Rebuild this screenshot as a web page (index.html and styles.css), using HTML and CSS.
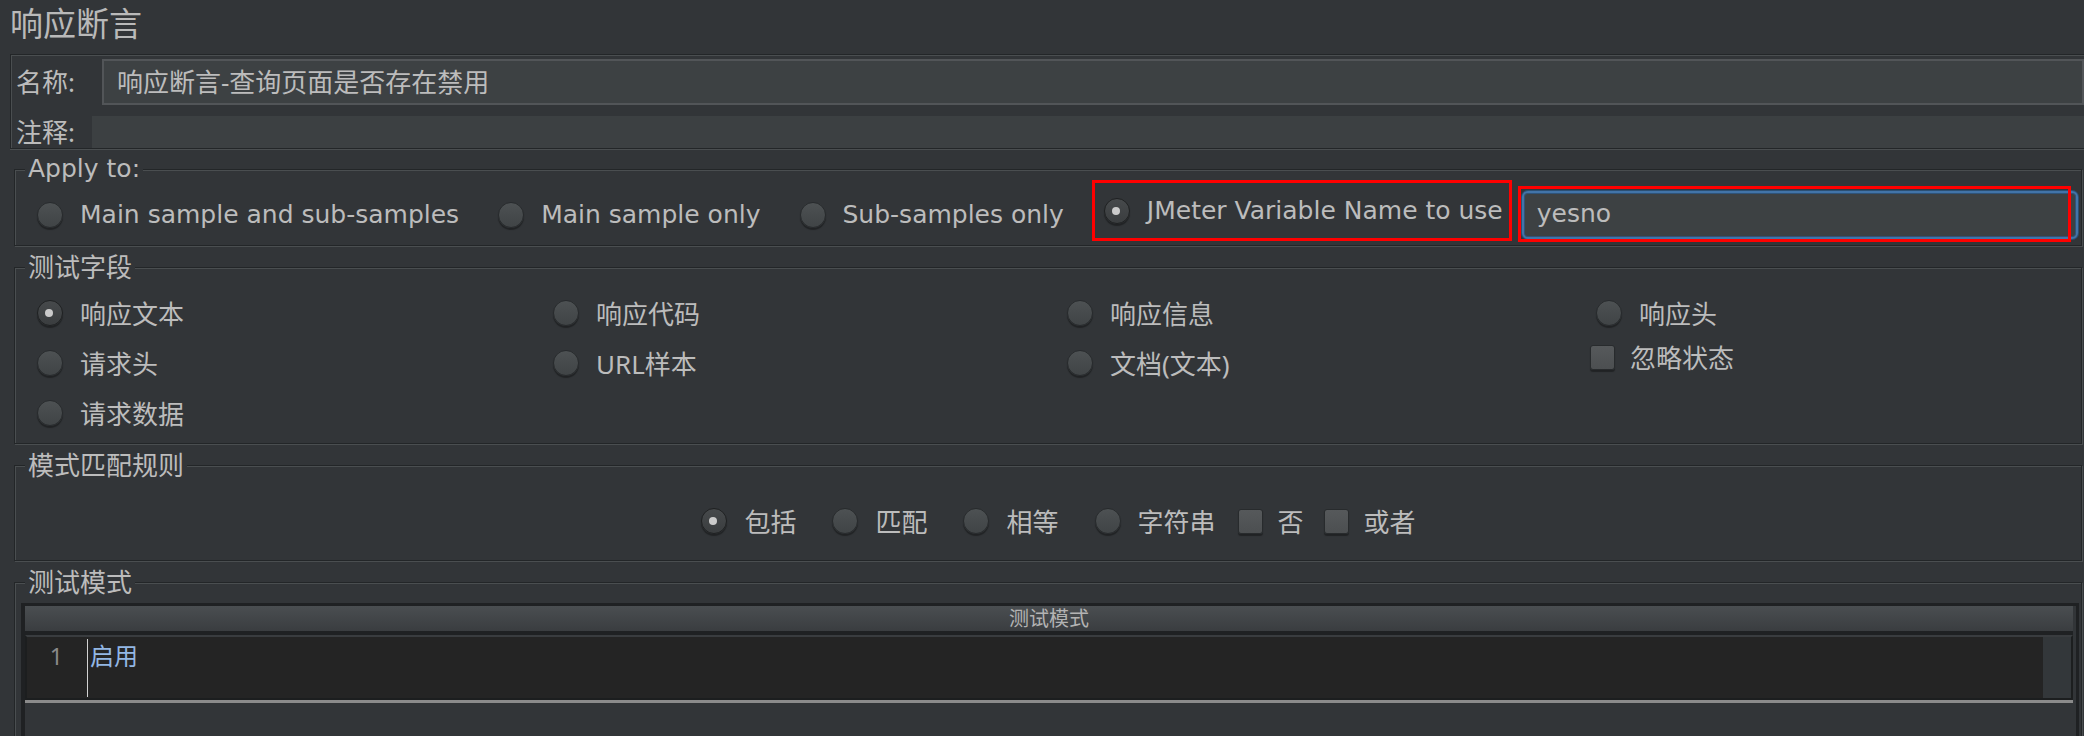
FILE: index.html
```html
<!DOCTYPE html>
<html lang="zh-CN">
<head>
    <meta charset="UTF-8">
    <meta name="viewport" content="width=device-width, initial-scale=1.0">
    <title>响应断言</title>
    <link rel="stylesheet" href="styles.css">
</head>
<body>
    <h1 class="page-title">响应断言</h1>

    <div class="name-panel">
        <div class="field-row">
            <label class="field-label name">名称:</label>
            <div class="text-field">响应断言-查询页面是否存在禁用</div>
        </div>
        <div class="field-row comment">
            <label class="field-label">注释:</label>
            <div class="text-field flat"></div>
        </div>
    </div>

    <fieldset class="group first">
        <legend class="en">Apply to:</legend>
        <div class="apply-row">
            <label class="opt en"><span class="radio"></span>Main sample and sub-samples</label>
            <label class="opt en"><span class="radio"></span>Main sample only</label>
            <label class="opt en"><span class="radio"></span>Sub-samples only</label>
            <div class="mark-box">
                <label class="opt en"><span class="radio on"></span>JMeter Variable Name to use</label>
            </div>
            <div class="var-field">
                <div class="text-field focus en">yesno</div>
                <span class="mark"></span>
            </div>
        </div>
    </fieldset>

    <fieldset class="group">
        <legend>测试字段</legend>
        <div class="field-grid">
            <label class="opt"><span class="radio on"></span>响应文本</label>
            <label class="opt"><span class="radio"></span>响应代码</label>
            <label class="opt"><span class="radio"></span>响应信息</label>
            <label class="opt"><span class="radio"></span>响应头</label>
            <label class="opt"><span class="radio"></span>请求头</label>
            <label class="opt"><span class="radio"></span>URL样本</label>
            <label class="opt"><span class="radio"></span>文档(文本)</label>
            <label class="opt check-opt"><span class="check"></span>忽略状态</label>
            <label class="opt"><span class="radio"></span>请求数据</label>
        </div>
    </fieldset>

    <fieldset class="group">
        <legend>模式匹配规则</legend>
        <div class="rule-row">
            <label class="opt"><span class="radio on"></span>包括</label>
            <label class="opt"><span class="radio"></span>匹配</label>
            <label class="opt"><span class="radio"></span>相等</label>
            <label class="opt"><span class="radio"></span>字符串</label>
            <label class="opt box"><span class="check"></span>否</label>
            <label class="opt box"><span class="check"></span>或者</label>
        </div>
    </fieldset>

    <fieldset class="group last">
        <legend>测试模式</legend>
        <div class="table-frame">
            <div class="table-head">测试模式</div>
            <div class="editor">
                <div class="editor-main">
                    <div class="gutter">1</div>
                    <div class="code">启用</div>
                </div>
                <div class="editor-side"></div>
            </div>
            <div class="editor-rule"></div>
        </div>
    </fieldset>
</body>
</html>
```

FILE: styles.css
```css
* {
    margin: 0;
    padding: 0;
    box-sizing: border-box;
}

body {
    font-family: 'Noto Sans', 'Noto Sans CJK SC', sans-serif;
    background: #323538;
    color: #bcbcbc;
    font-size: 26px;
    height: 736px;
    overflow: hidden;
}

.en {
    font-family: 'DejaVu Sans', 'Noto Sans CJK SC', sans-serif;
    font-size: 25px;
}

.page-title {
    height: 54px;
    line-height: 48px;
    padding-left: 10px;
    font-size: 33px;
    font-weight: normal;
    color: #b9b9b9;
}

/* name / comment */
.name-panel {
    margin: 0 0 5px 10px;
    border: 1px solid #232628;
    border-right: none;
    box-shadow: inset 1px 1px 0 #4a4e50, 0 1px 0 #4a4e50;
    padding-top: 4px;
}

.field-row {
    display: flex;
    align-items: center;
}

.field-row.comment {
    margin-top: 11px;
}

.field-label {
    width: 81px;
    padding-left: 5px;
    line-height: 30px;
    flex: none;
}

.field-label.name {
    width: 91px;
}

.text-field {
    flex: 1;
    height: 46px;
    line-height: 42px;
    padding-left: 13px;
    background: #3d4143;
    border: 2px solid #525558;
    white-space: nowrap;
}

.text-field.flat {
    height: 32px;
    border: none;
    background: #3c4042;
}

/* titled groups */
.group {
    margin: 6px 2px 0 14px;
    border: 1px solid #232628;
    box-shadow: inset 1px 1px 0 #4a4e50, 1px 1px 0 #4a4e50;
    min-width: 0;
}

.group.first {
    margin-top: 0;
}

.group legend {
    margin-left: 10px;
    padding: 0 3px;
    line-height: 30px;
    background: #323538;
}

.opt {
    display: flex;
    align-items: center;
    white-space: nowrap;
}

.radio {
    position: relative;
    flex: none;
    width: 26px;
    height: 26px;
    margin-right: 17px;
    border-radius: 50%;
    background: linear-gradient(#4d5153, #404446);
    border: 1px solid #282b2d;
    box-shadow: 0 2px 1px rgba(0,0,0,0.35);
}

.radio.on {
    background: linear-gradient(#46494b, #3a3d3f);
    border-color: #1f2122;
}

.radio.on::after {
    content: '';
    position: absolute;
    left: 7px;
    top: 8px;
    width: 8px;
    height: 8px;
    border-radius: 50%;
    background: #cbcbcb;
}

.check {
    flex: none;
    width: 25px;
    height: 25px;
    margin-right: 15px;
    border-radius: 3px;
    background: linear-gradient(#56595b, #4c4f51);
    border: 1px solid #282b2d;
    box-shadow: 0 2px 1px rgba(0,0,0,0.35);
}

/* apply to */
.apply-row {
    display: flex;
    align-items: center;
    height: 61px;
    padding-left: 22px;
}

.apply-row > .opt {
    margin-right: 39px;
}

.mark-box {
    align-self: flex-start;
    margin: -4px 0 0 -11px;
    height: 61px;
    display: flex;
    align-items: center;
    padding: 0 6px 0 9px;
    border: 3px solid #ff0000;
}

.var-field {
    position: relative;
    flex: 1;
    align-self: flex-start;
    margin: 7px 3px 0 10px;
}

.text-field.focus {
    height: 48px;
    line-height: 42px;
    border: 2px solid #4274a8;
    border-radius: 6px;
    box-shadow: 0 0 0 1px #2c4f73, inset 0 0 0 1px #2f5378;
}

.mark {
    position: absolute;
    left: -4px;
    right: 7px;
    top: -5px;
    bottom: -3px;
    border: 3px solid #ff0000;
}

/* 测试字段 */
.field-grid {
    display: grid;
    grid-template-columns: 516px 514px 529px 1fr;
    grid-auto-rows: 50px;
    align-items: center;
    padding: 6px 0 5px 22px;
}

.check-opt {
    margin: -12px 0 0 -6px;
}

/* 模式匹配规则 */
.rule-row {
    display: flex;
    justify-content: center;
    align-items: center;
    height: 80px;
    padding: 2px 0 0 13px;
}

.rule-row .opt {
    padding: 0 18px;
}

.rule-row .opt.box {
    padding: 0 10px;
}

.rule-row .opt:nth-child(4) {
    padding-right: 12px;
}

/* 测试模式 */
.group.last {
    height: 300px;
}

.table-frame {
    margin: 6px 2px 0 6px;
    border: solid #1f2123;
    border-width: 3px 3px 0 4px;
    height: 200px;
}

.table-head {
    height: 29px;
    line-height: 25px;
    text-align: center;
    font-size: 20px;
    color: #b3b3b3;
    background: linear-gradient(#4a4e51, #3a3d40);
    border-bottom: 4px solid #1f2123;
    margin-right: 3px;
}

.editor {
    display: flex;
    height: 65px;
    margin-right: 3px;
    border: 2px solid #1c1e1f;
    border-top-color: #393c3f;
}

.editor-main {
    flex: 1;
    display: flex;
    background: #242424;
}

.editor-side {
    width: 28px;
    background: #33373a;
}

.gutter {
    width: 61px;
    padding: 2px 24px 0 0;
    text-align: right;
    font-size: 23px;
    line-height: 30px;
    color: #8a8a8a;
    border-right: 1px solid #d2d2d2;
    margin: 2px 0 1px;
}

.code {
    padding: 2px 0 0 2px;
    line-height: 34px;
    color: #93b7e4;
    font-size: 24px;
}

.editor-rule {
    height: 3px;
    margin-right: 3px;
    background: #8b8b8b;
}
```
